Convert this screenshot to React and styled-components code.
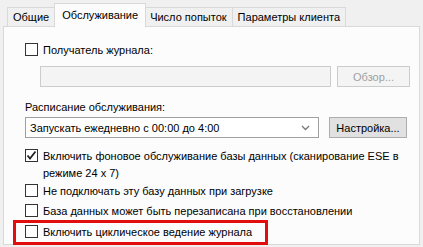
import styled, { createGlobalStyle } from "styled-components";

const Global = createGlobalStyle`
  body {
    margin: 0;
    background: #f0f0f0;
    font-family: "Liberation Sans", Arial, sans-serif;
    font-size: 11px;
    color: #000;
  }
`;

const Page = styled.div`
  width: 423px;
  height: 247px;
  padding: 3px 3px 0;
  box-sizing: border-box;
  overflow: hidden;
`;

const TabStrip = styled.div`
  display: flex;
  align-items: flex-end;
  padding-left: 4px;
  height: 24px;
  position: relative;
  z-index: 1;
`;

const Tab = styled.div`
  height: ${(p) => (p.$active ? "24px" : "20px")};
  padding: 0 ${(p) => (p.$active ? "7px" : "5px")};
  margin: 0 ${(p) => (p.$active ? "-1px" : "0")};
  box-sizing: border-box;
  border: 1px solid #d9d9d9;
  border-bottom: ${(p) => (p.$active ? "none" : "1px solid #d9d9d9")};
  border-left: ${(p) => (p.$first || p.$active ? "1px solid #d9d9d9" : "none")};
  background: ${(p) => (p.$active ? "#fcfcfc" : "#f0f0f0")};
  display: flex;
  align-items: center;
  padding-bottom: ${(p) => (p.$active ? "2px" : "0")};
  z-index: ${(p) => (p.$active ? 2 : 0)};
  white-space: nowrap;
`;

const Panel = styled.div`
  height: 219px;
  margin-top: -1px;
  border: 1px solid #d9d9d9;
  background: #fcfcfc;
  box-sizing: border-box;
  padding: 15px 0 0 21px;
  display: flex;
  flex-direction: column;
`;

const Row = styled.label`
  display: flex;
  align-items: flex-start;
  gap: 5px;
  line-height: ${(p) => p.$lh || 16}px;
  margin-top: ${(p) => p.$mt || 0}px;
`;

const Highlight = styled(Row)`
  border: 3px solid #e20d0d;
  margin-left: -12px;
  padding: 1px 9px 2px;
  width: 255px;
  box-sizing: border-box;
  white-space: nowrap;
`;

const Box = styled.span`
  width: 13px;
  height: 13px;
  flex: none;
  box-sizing: border-box;
  border: 1px solid #333;
  background: #fff;
  margin-top: 1px;
  display: flex;
  align-items: center;
  justify-content: center;
`;

const Text = styled.span`
  flex: 1;
  padding-right: 20px;
`;

const FieldRow = styled.div`
  display: flex;
  align-items: center;
  gap: ${(p) => p.$gap}px;
  margin-left: ${(p) => p.$ml || 0}px;
  margin-top: ${(p) => p.$mt || 0}px;
`;

const Field = styled.div`
  width: ${(p) => p.$w}px;
  height: 21px;
  box-sizing: border-box;
  border: 1px solid ${(p) => (p.$disabled ? "#cccccc" : "#a0a0a0")};
  background: ${(p) => (p.$disabled ? "#f4f4f4" : "#fff")};
  display: flex;
  align-items: center;
  justify-content: space-between;
  padding: 0 8px 0 4px;
`;

const Button = styled.div`
  width: ${(p) => p.$w}px;
  height: 21px;
  box-sizing: border-box;
  border: 1px solid ${(p) => (p.$disabled ? "#cccccc" : "#adadad")};
  background: ${(p) => (p.$disabled ? "#f4f4f4" : "#e1e1e1")};
  color: ${(p) => (p.$disabled ? "#a0a0a0" : "#000")};
  display: flex;
  align-items: center;
  justify-content: center;
`;

const Label = styled.div`
  margin-top: ${(p) => p.$mt || 0}px;
  line-height: 16px;
`;

const Check = () => (
  <svg width="11" height="11" viewBox="0 0 11 11">
    <path d="M1.5 5.5 L4 8.5 L9.5 1.5" fill="none" stroke="#222" strokeWidth="1.8" />
  </svg>
);

const Chevron = () => (
  <svg width="9" height="6" viewBox="0 0 9 6">
    <path d="M1 1 L4.5 4.5 L8 1" fill="none" stroke="#777" strokeWidth="1.3" />
  </svg>
);

export default function App() {
  return (
    <Page>
      <Global />
      <TabStrip>
        <Tab $first>Общие</Tab>
        <Tab $active>Обслуживание</Tab>
        <Tab>Число попыток</Tab>
        <Tab>Параметры клиента</Tab>
      </TabStrip>
      <Panel>
        <Row>
          <Box />
          <Text>Получатель журнала:</Text>
        </Row>
        <FieldRow $gap={6} $ml={15} $mt={8}>
          <Field $w={291} $disabled />
          <Button $w={73} $disabled>Обзор...</Button>
        </FieldRow>
        <Label $mt={12}>Расписание обслуживания:</Label>
        <FieldRow $gap={10} $mt={2}>
          <Field $w={294}>
            <span>Запускать ежедневно с 00:00 до 4:00</span>
            <Chevron />
          </Field>
          <Button $w={78}>Настройка...</Button>
        </FieldRow>
        <Row $mt={10} $lh={17}>
          <Box><Check /></Box>
          <Text>Включить фоновое обслуживание базы данных (сканирование ESE в режиме 24 x 7)</Text>
        </Row>
        <Row $mt={1}>
          <Box />
          <Text>Не подключать эту базу данных при загрузке</Text>
        </Row>
        <Row $mt={4}>
          <Box />
          <Text>База данных может быть перезаписана при восстановлении</Text>
        </Row>
        <Highlight $mt={1}>
          <Box />
          <Text>Включить циклическое ведение журнала</Text>
        </Highlight>
      </Panel>
    </Page>
  );
}
